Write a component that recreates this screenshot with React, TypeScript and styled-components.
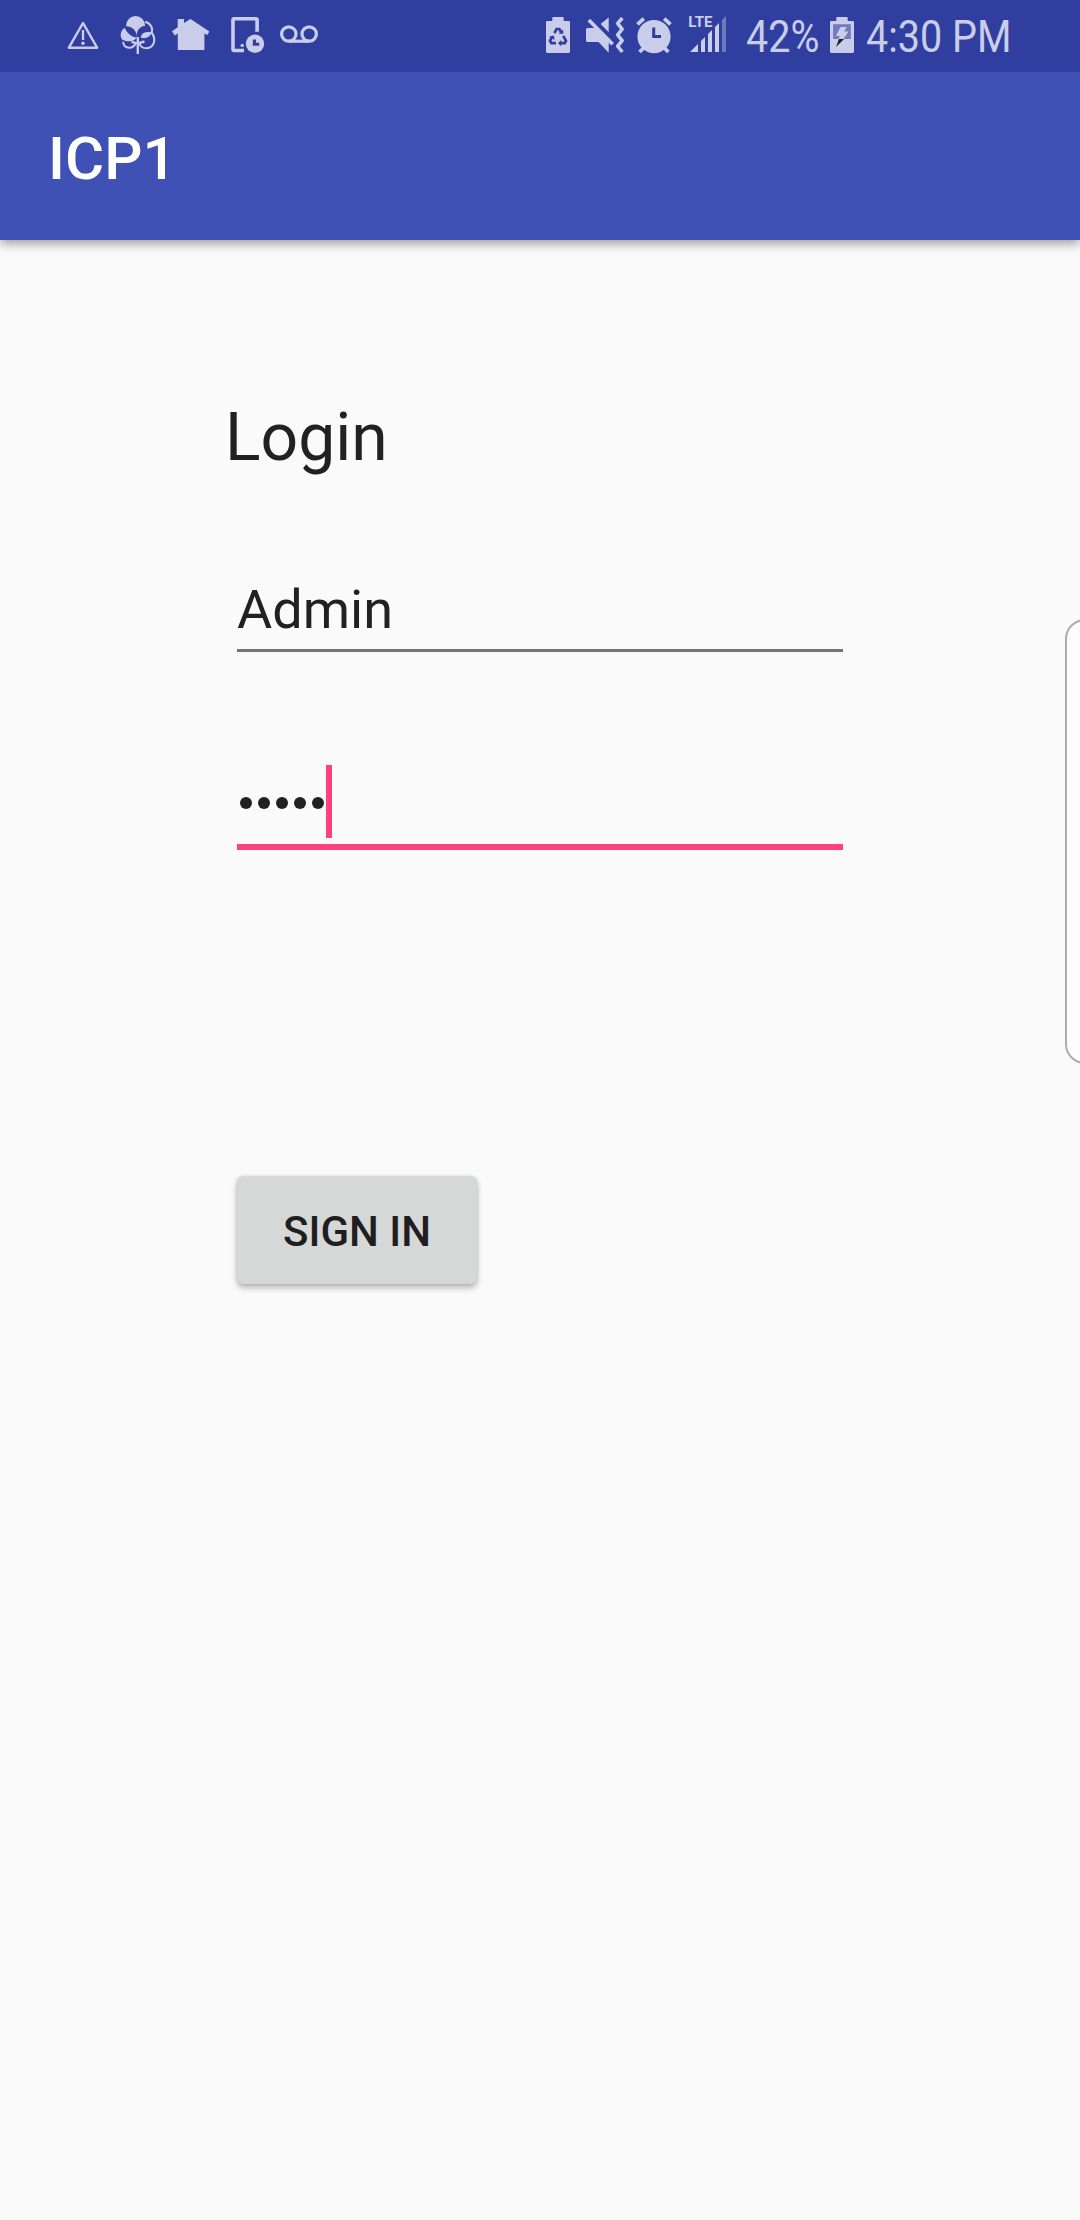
import React from 'react';
import styled, { createGlobalStyle } from 'styled-components';

const BAR = '#303f9f';
const INK = '#c9cde9';

const GlobalStyle = createGlobalStyle`
  *, *::before, *::after { box-sizing: border-box; }
  body {
    margin: 0;
    background: #fafafa;
    font-family: Roboto, "Noto Sans", sans-serif;
    overflow-x: hidden;
  }
`;

const Screen = styled.div`
  position: relative;
  display: flex;
  flex-direction: column;
  width: 1080px;
  height: 2220px;
  overflow: hidden;
  background: #fafafa;
`;

const StatusBar = styled.div`
  position: relative;
  z-index: 1;
  display: flex;
  align-items: center;
  flex: none;
  height: 72px;
  background: ${BAR};
  color: ${INK};
`;

const IconSvg = styled.svg<{ $gap: number }>`
  flex: none;
  display: block;
  height: 40px;
  margin-left: ${(p) => p.$gap}px;
  fill: ${INK};
  overflow: visible;
`;

const StatusText = styled.span<{ $gap: number; $width: number }>`
  flex: none;
  width: ${(p) => p.$width}px;
  margin-left: ${(p) => p.$gap}px;
  font-size: 45px;
  line-height: 72px;
  white-space: nowrap;
  transform: translateY(1px) scaleX(0.878);
  transform-origin: 0 50%;
`;

const AppBar = styled.header`
  display: flex;
  align-items: center;
  flex: none;
  height: 168px;
  padding: 5px 48px 0;
  background: #3f51b5;
  box-shadow: 0 4px 10px rgba(0, 0, 0, 0.36);
`;

const AppTitle = styled.h1`
  margin: 0;
  font-size: 60px;
  font-weight: 500;
  line-height: 71px;
  color: #fff;
`;

const Form = styled.form`
  display: flex;
  flex-direction: column;
  align-items: flex-start;
  padding: 159px 237px 0;
`;

const Heading = styled.h2`
  margin: 0 0 0 -12px;
  font-size: 66px;
  font-weight: 400;
  line-height: 78px;
  color: #212121;
`;

const Field = styled.div<{ $focused?: boolean; $top: number }>`
  display: flex;
  align-items: flex-start;
  width: 606px;
  height: ${(p) => (p.$focused ? 85 : 75)}px;
  margin-top: ${(p) => p.$top}px;
  border-bottom: ${(p) => (p.$focused ? '6px solid #ff4081' : '3px solid #757575')};
`;

const Value = styled.span`
  padding-top: 1px;
  font-size: 54px;
  line-height: 64px;
  color: #212121;
`;

const Dots = styled.span`
  display: flex;
  gap: 6px;
  padding: 32px 0 0 3px;
`;

const Dot = styled.i`
  width: 12px;
  height: 12px;
  border-radius: 50%;
  background: #212121;
`;

const Caret = styled.span`
  width: 6px;
  height: 73px;
  margin-left: 2px;
  background: #ff4081;
`;

const SignIn = styled.button`
  width: 240px;
  height: 108px;
  margin-top: 326px;
  padding: 4px 0 0;
  border: 0;
  border-radius: 6px;
  background: #d6d7d7;
  box-shadow: 0 4px 6px rgba(0, 0, 0, 0.26), 0 0 3px rgba(0, 0, 0, 0.12);
  font-family: inherit;
  font-size: 42px;
  font-weight: 500;
  line-height: 50px;
  color: #1f1f1f;
`;

const EdgeHandle = styled.div`
  position: absolute;
  top: 619px;
  left: 1065px;
  width: 40px;
  height: 445px;
  border: 2px solid #acacac;
  border-radius: 20px;
  background: #fdfdfd;
`;

type IconProps = { width: number; gap: number; children: React.ReactNode };

const Icon = ({ width, gap, children }: IconProps) => (
  <IconSvg $gap={gap} width={width} height={40} viewBox={`0 0 ${width} 40`} aria-hidden="true">
    {children}
  </IconSvg>
);

const WarningIcon = () => (
  <Icon width={32} gap={67}>
    <path d="M16 7 1.9 31.7H30.1Z" fill="none" stroke={INK} strokeWidth="2.4" strokeLinejoin="round" />
    <path d="M16 14V24" stroke={INK} strokeWidth="2.4" />
    <circle cx="16" cy="27.3" r="1.7" />
  </Icon>
);

const CottonIcon = () => (
  <Icon width={36} gap={21}>
    <circle cx="15.6" cy="9.3" r="9.4" />
    <circle cx="8.8" cy="19" r="8.2" />
    <path d="M25.3 5.8C31 7.5 33.5 13 31.3 17.2" fill="none" stroke={INK} strokeWidth="2" />
    <path d="M31.5 16.5C36.2 22 35 32 26.5 32.3C23 32.3 20.5 30.5 19.5 28" fill="none" stroke={INK} strokeWidth="2" />
    <path d="M4 10.5C11 9.5 17 14 16.8 21.5C11 21 7 17 4 10.5Z" fill={BAR} />
    <path d="M27 9.8C20 9.5 16 14.5 16.8 21.5C22.5 20.5 26 16 27 9.8Z" fill={BAR} />
    <path d="M0 23.4C3 23.4 4 24.8 7 25.2S12 25 14 24.2L18 21V29H1Z" fill={BAR} />
    <path d="M20.5 21.5C22 16.5 26.5 15 32 16.6C29.5 21.5 25.5 23.3 20.5 21.5Z" />
    <path d="M3.4 25.8C2.6 29 5.5 32 9.5 31.8C12.5 31.6 14.3 30 15.3 28" fill="none" stroke={INK} strokeWidth="2" />
    <path d="M17.8 21V38M11.5 25.8 17.8 27.5 24.5 25.5" fill="none" stroke={INK} strokeWidth="2.4" />
  </Icon>
);

const HomeIcon = () => (
  <Icon width={38} gap={16}>
    <path d="M0 15.3 5.7 11.2V3H12V7L18.5 3.1 37.4 15.5 35.2 19 32.4 17.4V34H5.8V17.4L2.8 19.4Z" />
  </Icon>
);

const DeviceClockIcon = () => (
  <Icon width={34} gap={21}>
    <path d="M26.1 15.8V4Q26.1 2.8 24.9 2.8H3.2Q2 2.8 2 4V33.3Q2 34.5 3.2 34.5H13" fill="none" stroke={INK} strokeWidth="3.6" />
    <circle cx="11.2" cy="29.4" r="1.7" />
    <circle cx="24" cy="27.8" r="9.2" />
    <path d="M21.8 23.4H25V26.8H28.2V29.8H21.8Z" fill={BAR} />
  </Icon>
);

const VoicemailIcon = () => (
  <Icon width={39} gap={15}>
    <g fill="none" stroke={INK} strokeWidth="3.2">
      <circle cx="8.8" cy="18" r="7.2" />
      <circle cx="29.2" cy="18" r="7.2" />
      <path d="M8.8 25.2H29.2" />
    </g>
  </Icon>
);

const BatteryBody = () => <path d="M6.3 5V2Q6.3 1 7.3 1H16.7Q17.7 1 17.7 2V5H22.8Q24 5 24 6.2V35.6Q24 37 22.6 37H1.4Q0 37 0 35.6V6.2Q0 5 1.2 5Z" />;

const BatteryRecycleIcon = () => (
  <Icon width={24} gap={227}>
    <BatteryBody />
    <g fill="none" stroke={BAR} strokeWidth="2.7">
      <path d="M8.4 17 10.6 13H13.3L15.2 16.2" />
      <path d="M17.2 19.8 20 24.8 18.8 27.2H14.5" />
      <path d="M6 20.8 4 24.8 5.3 27.2H10" />
    </g>
    <path d="M12.6 17.8 17.4 17.8 17 13.4ZM15.2 24V30.2L12 27.2ZM3.2 20.6 8 19.4 8.6 24Z" fill={BAR} />
  </Icon>
);

const MuteVibrateIcon = () => (
  <Icon width={40} gap={16}>
    <path d="M1.5 12H9.5L22.7 1.5V36.7L12.5 26H1.5Q0 26 0 24.5V13.5Q0 12 1.5 12Z" />
    <path d="M3.4 1.2 28 26" stroke={BAR} strokeWidth="6.4" />
    <path d="M2.8 4 26.6 28.2" stroke={INK} strokeWidth="3.7" />
    <path d="M36.4 2 31.6 7.4 36.2 13.2 31.6 18.9 36.2 24.6 31.6 30.2 36.4 36" fill="none" stroke={INK} strokeWidth="3.5" strokeLinejoin="round" />
  </Icon>
);

const AlarmIcon = () => (
  <Icon width={36} gap={10}>
    <circle cx="18" cy="20.6" r="16.6" />
    <g stroke={INK} strokeWidth="3.8">
      <path d="M1.5 8.4 7.8 2.6M28.2 2.6 34.5 8.4M3.6 36 8.6 31M32.4 36 27.4 31" />
    </g>
    <path d="M16.2 11.6H19.2V19H25V22H16.2Z" fill={BAR} />
  </Icon>
);

const LteLabel = styled.text`
  font-family: Roboto, sans-serif;
  font-size: 15.2px;
  font-weight: 700;
`;

const SignalIcon = () => (
  <Icon width={38} gap={17}>
    <LteLabel x="-0.8" y="11" textLength="24.2" lengthAdjust="spacingAndGlyphs">LTE</LteLabel>
    <path d="M1 36 9 28V36ZM12 36V25L16 21V36ZM19 36V18L23 14V36ZM26 36V11L30 7V36Z" />
    <path d="M33 36V4L37 0V36Z" opacity="0.42" />
  </Icon>
);

const BatteryChargeIcon = () => (
  <Icon width={24} gap={0}>
    <BatteryBody />
    <path d="M3.1 8.2H20.8V23H3.1Z" fill="#717bbd" />
    <path d="M10.6 11H16.6L14.2 15.6H18.6L13.4 23H8.6L9.8 20H5.8Z" />
    <path d="M9 23H14L6 31Z" fill="#1c1c22" />
  </Icon>
);

export default function App() {
  return (
    <>
      <GlobalStyle />
      <Screen>
        <StatusBar>
          <WarningIcon />
          <CottonIcon />
          <HomeIcon />
          <DeviceClockIcon />
          <VoicemailIcon />
          <BatteryRecycleIcon />
          <MuteVibrateIcon />
          <AlarmIcon />
          <SignalIcon />
          <StatusText $gap={19} $width={84}>42%</StatusText>
          <BatteryChargeIcon />
          <StatusText $gap={12} $width={180}>4:30 PM</StatusText>
        </StatusBar>
        <AppBar>
          <AppTitle>ICP1</AppTitle>
        </AppBar>
        <Form onSubmit={(e) => e.preventDefault()}>
          <Heading>Login</Heading>
          <Field $top={100}>
            <Value>Admin</Value>
          </Field>
          <Field $top={113} $focused>
            <Dots>
              {[0, 1, 2, 3, 4].map((i) => (
                <Dot key={i} />
              ))}
            </Dots>
            <Caret />
          </Field>
          <SignIn>SIGN IN</SignIn>
        </Form>
        <EdgeHandle />
      </Screen>
    </>
  );
}
